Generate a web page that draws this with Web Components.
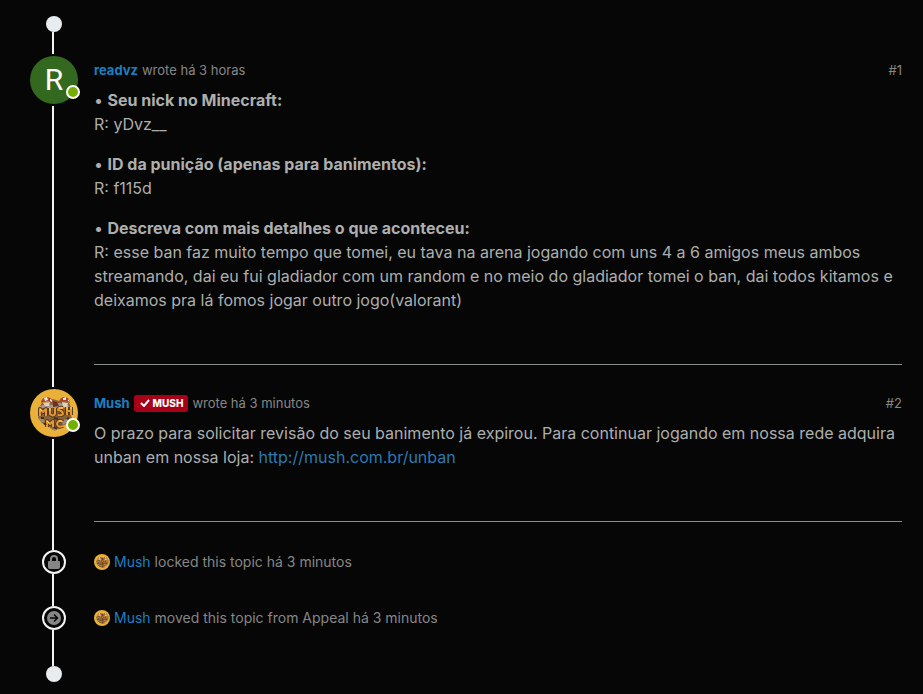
<!DOCTYPE html>
<html lang="pt-BR">
<head>
<meta charset="utf-8">
<meta name="viewport" content="width=device-width, initial-scale=1">
<title>Appeal</title>
<style>
body { margin: 0; background: #060606; color: #adafae; font: 16px/24px Inter, "Noto Sans", sans-serif; }
p { margin: 0 0 16px; }
p:last-child { margin: 0; }
a { color: #2a7ab0; text-decoration: none; }
a:hover { text-decoration: underline; }
</style>
</head>
<body>
<topic-timeline>
  <timeline-end></timeline-end>
  <topic-post author="readvz" when="há 3 horas" number="#1">
    <letter-avatar slot="avatar">R</letter-avatar>
    <p>• <strong>Seu nick no Minecraft:</strong><br>R: yDvz__</p>
    <p>• <strong>ID da punição (apenas para banimentos):</strong><br>R: f115d</p>
    <p>• <strong>Descreva com mais detalhes o que aconteceu:</strong><br>R: esse ban faz muito tempo que tomei, eu tava na arena jogando com uns 4 a 6 amigos meus ambos streamando, dai eu fui gladiador com um random e no meio do gladiador tomei o ban, dai todos kitamos e deixamos pra lá fomos jogar outro jogo(valorant)</p>
  </topic-post>
  <topic-post class="last" author="Mush" when="há 3 minutos" number="#2">
    <mush-avatar slot="avatar"></mush-avatar>
    <group-badge slot="badge">MUSH</group-badge>
    <p>O prazo para solicitar revisão do seu banimento já expirou. Para continuar jogando em nossa rede adquira unban em nossa loja: <a href="http://mush.com.br/unban">http://mush.com.br/unban</a></p>
  </topic-post>
  <topic-event icon="lock" author="Mush">locked this topic há 3 minutos</topic-event>
  <topic-event icon="move" author="Mush">moved this topic from Appeal há 3 minutos</topic-event>
  <timeline-end class="bottom"></timeline-end>
</topic-timeline>
<script>
const base = `<style>
* { box-sizing: border-box; }
a { color: #1c7fc0; text-decoration: none; }
a:hover { text-decoration: underline; }
.rail { width: 48px; flex: none; display: flex; flex-direction: column; align-items: center; }
.line { width: 2px; margin-right: 2px; flex: 1; background: #f1f3f5; }
</style>`;
function define(name, render) {
  customElements.define(name, class extends HTMLElement {
    constructor() {
      super();
      this.attachShadow({ mode: 'open' }).innerHTML = base + render(this);
    }
  });
}

define('topic-timeline', () => `<style>
:host { display: flex; flex-direction: column; padding: 16px 21px 12px 30px; }
</style><slot></slot>`);

define('timeline-end', () => `<style>
:host { display: block; }
.rail { height: 40px; padding-bottom: 2px; }
.dot { width: 16px; height: 16px; margin-right: 1px; border-radius: 50%; background: #e9ecef; flex: none; }
:host(.bottom) .rail { height: 20px; padding: 0; flex-direction: column-reverse; }
</style><div class="rail"><span class="dot"></span><span class="line"></span></div>`);

define('letter-avatar', () => `<style>
:host { display: flex; width: 48px; height: 48px; border-radius: 50%; background: #33691e; color: #fff; align-items: center; justify-content: center; font: 30px/48px Roboto, sans-serif; }
</style><slot></slot>`);

define('mush-avatar', () => `<style>
:host { display: inline-block; width: 48px; height: 48px; }
svg { display: block; width: 100%; height: 100%; }
</style><svg viewBox="0 0 48 48" aria-hidden="true">
<circle cx="24" cy="24" r="24" fill="#e9b03a"/>
<path d="M8 20l4-6 6-1 5-3 6 2 5-1 5 3 3 6-1 6 1 4-5 5-6 2-3 3-5 1-5-4-6-3-4-5 1-4z" fill="#8a6238"/>
<path d="M10 17l6-2 7 1 6-2 9 2 2 3H9z" fill="#a8988c"/>
<path d="M8 29l5 1 3 4-4-1zM33 31l8-2-4 5-5 2zM18 38l5 2 7-2-5 4z" fill="#9d8a7c"/>
<path d="M11 14q0-5 6-6 6 1 6 5-6-2-12 1zM29 13q1-5 6-5 5 1 5 6-5-3-11-1z" fill="#a84632"/>
<path d="M14 9l3-1 1 3-3 1zM20 10l2 1v2l-2-1zM33 9l3-1v3h-3zM38 10l2 3-2-1z" fill="#f6e9dc"/>
<path d="M13 14l7-1-1 4h-4zM32 13l6 1-1 4h-4z" fill="#e2cfba"/>
<path d="M23 12l4 1 2 4-6 1z" fill="#6d3024"/>
<g fill="none" stroke="#583a25" stroke-width="4" stroke-linejoin="round"><path d="M10 27v-7l3 3 3-3v7M20 19v6q3 3 5 0v-6M33 19q-5-1-5 2 5 1 5 4-2 2-5 1M37 18v8M37 22h4M41 18v8M17 38v-6l3 3 3-3v6M33 33q-5-3-6 2 1 4 6 2"/></g>
<g fill="none" stroke="#e6982c" stroke-width="2" stroke-linejoin="round"><path d="M10 27v-7l3 3 3-3v7M20 19v6q3 3 5 0v-6M33 19q-5-1-5 2 5 1 5 4-2 2-5 1M37 18v8M37 22h4M41 18v8M17 38v-6l3 3 3-3v6M33 33q-5-3-6 2 1 4 6 2"/></g>
<path d="M10 20l2 2M20 19v3M29 19h4M37 18v2M41 18v2M17 32l2 2M29 32h3" stroke="#ffdc68" stroke-width="1"/>
<path d="M11 29h3M24 29l4 1M37 29l2 1M24 38l3 2M14 34l2 2" stroke="#43291e" stroke-width="2"/>
</svg>`);

define('group-badge', () => `<style>
:host { display: inline-flex; align-items: center; gap: 3px; height: 17px; padding: 0 5px 0 6px; border-radius: 3px; background: #a80016; color: #fff; font-size: 10px; line-height: 16px; font-weight: 800; }
svg { width: 10px; height: 8px; }
</style><svg viewBox="0 0 10 8" aria-hidden="true"><path d="M1 4l3 3 5-6" fill="none" stroke="#fff" stroke-width="2"/></svg><slot></slot>`);

define('topic-post', el => `<style>
:host { display: flex; gap: 16px; }
.avatar { position: relative; flex: none; width: 48px; height: 48px; }
.online { position: absolute; right: -2px; bottom: 5px; width: 14px; height: 14px; border: 2px solid #fff; border-radius: 50%; background: #74b000; }
.line { margin-top: 2px; margin-bottom: 2px; }
article { flex: 1; min-width: 0; padding-bottom: 24px; }
header { display: flex; align-items: center; gap: 4px; padding-top: 4px; margin-bottom: 8px; font-size: 13px; line-height: 20px; color: #868686; }
header a { font-weight: 700; }
header .number { margin-left: auto; color: #868686; font-weight: 400; }
.body { padding-bottom: 52px; border-bottom: 1px solid #868e8e; }
:host(.last) article { padding-bottom: 28px; }
:host(.last) .line { margin-bottom: 0; }
</style>
<div class="rail"><div class="avatar"><slot name="avatar"></slot><span class="online"></span></div><span class="line"></span></div>
<article>
<header><a href="#">${el.getAttribute('author')}</a><slot name="badge"></slot><span>wrote ${el.getAttribute('when')}</span><a class="number" href="#">${el.getAttribute('number')}</a></header>
<div class="body"><slot></slot></div>
</article>`);

const icons = {
  lock: '<path d="M4 7V5a4 4 0 0 1 8 0v2h1a1 1 0 0 1 1 1v5a2 2 0 0 1-2 2H4a2 2 0 0 1-2-2V8a1 1 0 0 1 1-1zm2 0h4V5a2 2 0 0 0-4 0z"/>',
  move: '<circle cx="8" cy="8" r="7"/><path d="M4 8h7M8 4.500L11.500 8 8 11.500" fill="none" stroke="#060606" stroke-width="1.500"/>'
};
define('topic-event', el => `<style>
:host { display: flex; gap: 16px; min-height: 56px; font-size: 14px; line-height: 24px; color: #868686; }
.node { display: flex; align-items: center; justify-content: center; width: 24px; height: 24px; flex: none; border: 2px solid #f1f3f5; border-radius: 50%; }
.node svg { width: 16px; height: 16px; fill: #868686; }
.text { display: flex; align-items: center; gap: 4px; height: 24px; }
mush-avatar { width: 16px; height: 16px; }
</style>
<div class="rail"><span class="node"><svg viewBox="0 0 16 16" aria-hidden="true">${icons[el.getAttribute('icon')]}</svg></span><span class="line"></span></div>
<div class="text"><mush-avatar></mush-avatar><a href="#">${el.getAttribute('author')}</a><span><slot></slot></span></div>`);
</script>
</body>
</html>
